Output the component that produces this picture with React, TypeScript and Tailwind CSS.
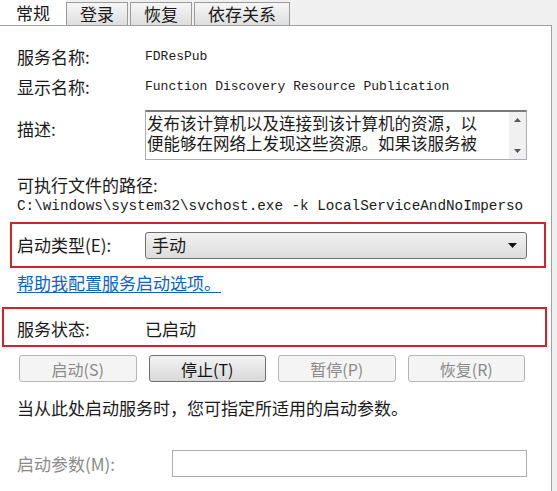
import React from 'react';

const cjk = { fontFamily: '"Noto Sans CJK SC", "Noto Sans", sans-serif' };
const mono = { fontFamily: '"Liberation Mono", "DejaVu Sans Mono", monospace' };

function Tab({ label, active }: { label: string; active?: boolean }) {
  if (active) {
    return (
      <div className="w-[66px] h-[25px] flex items-center justify-center text-[17px] text-[#1a1a1a] bg-white">
        {label}
      </div>
    );
  }
  return (
    <div className="h-[23px] flex items-center px-[13px] mr-[2px] text-[17px] text-[#1a1a1a] border border-b-0 border-[#9a9a9a] bg-gradient-to-b from-[#f6f6f6] to-[#dedede]">
      {label}
    </div>
  );
}

function Btn({ label, enabled }: { label: string; enabled?: boolean }) {
  return (
    <div
      className={`h-[27px] flex items-center justify-center rounded-[3px] text-[16px] border ${
        enabled
          ? 'border-[#707070] text-[#111] bg-gradient-to-b from-[#f3f3f3] to-[#d9d9d9]'
          : 'border-[#b5b5b5] text-[#8a8a8a] bg-[#f4f4f4]'
      }`}
    >
      {label}
    </div>
  );
}

export default function App() {
  return (
    <div className="w-[557px] h-[491px] bg-[#f0f0f0] overflow-hidden" style={cjk}>
      {/* Tabs */}
      <div className="flex items-end h-[25px]">
        <Tab label="常规" active />
        <Tab label="登录" />
        <Tab label="恢复" />
        <Tab label="依存关系" />
      </div>

      {/* Panel */}
      <div className="w-[552px] h-[466px] bg-white border-t border-r border-[#a0a0a0] pt-[19px] text-[17px] text-[#1a1a1a]">
        <div className="h-[24px] flex items-center pl-[17px]">
          <span className="w-[128px]">服务名称:</span>
          <span className="text-[13px]" style={mono}>FDResPub</span>
        </div>
        <div className="mt-[6px] h-[24px] flex items-center pl-[17px]">
          <span className="w-[128px]">显示名称:</span>
          <span className="text-[13px]" style={mono}>Function Discovery Resource Publication</span>
        </div>

        {/* Description */}
        <div className="mt-[11px] h-[50px] flex pl-[17px]">
          <span className="w-[128px] pt-[6px]">描述:</span>
          <div className="w-[382px] h-[50px] flex border border-[#abadb3] border-t-[#7a7a7a] border-t-2">
            <div className="flex-1 pl-[1px] pt-[1px] text-[16.5px] leading-[20px]">
              <div className="whitespace-nowrap">发布该计算机以及连接到该计算机的资源，以</div>
              <div className="whitespace-nowrap">便能够在网络上发现这些资源。如果该服务被</div>
            </div>
            <div className="w-[17px] bg-[#f0f0f0] flex flex-col items-center justify-between py-[6px]">
              <svg width="7" height="4" viewBox="0 0 7 4"><path d="M0 4 L3.5 0 L7 4 Z" fill="#555" /></svg>
              <svg width="7" height="4" viewBox="0 0 7 4"><path d="M0 0 L3.5 4 L7 0 Z" fill="#555" /></svg>
            </div>
          </div>
        </div>

        <div className="mt-[13px] h-[24px] flex items-center pl-[17px]">可执行文件的路径:</div>
        <div className="h-[20px] flex items-center pl-[17px]">
          <span className="text-[14.3px] whitespace-nowrap" style={mono}>
            C:\windows\system32\svchost.exe -k LocalServiceAndNoImperso
          </span>
        </div>

        {/* Startup type (highlighted) */}
        <div className="mt-[5px] ml-[10px] w-[536px] h-[46px] border-2 border-[#d0232b] flex items-center pl-[5px]">
          <span className="w-[128px]">启动类型(E):</span>
          <div className="w-[382px] h-[27px] rounded-[3px] border border-[#707070] bg-gradient-to-b from-[#f2f2f2] to-[#dcdcdc] flex items-center justify-between pl-[6px] pr-[9px]">
            <span>手动</span>
            <svg width="9" height="5" viewBox="0 0 9 5"><path d="M0 0 L9 0 L4.5 5 Z" fill="#111" /></svg>
          </div>
        </div>

        <div className="mt-[3px] h-[24px] flex items-center pl-[17px]">
          <span className="text-[#0b63c5] underline underline-offset-2">帮助我配置服务启动选项。</span>
        </div>

        {/* Service status (highlighted) */}
        <div className="mt-[12px] ml-[2px] w-[545px] h-[40px] border-2 border-[#d0232b] flex items-center pl-[13px] pt-[4px]">
          <span className="w-[128px]">服务状态:</span>
          <span>已启动</span>
        </div>

        {/* Buttons */}
        <div className="mt-[8px] ml-[19px] w-[506px] grid grid-cols-4 gap-[12px]">
          <Btn label="启动(S)" />
          <Btn label="停止(T)" enabled />
          <Btn label="暂停(P)" />
          <Btn label="恢复(R)" />
        </div>

        <div className="mt-[14px] h-[24px] flex items-center pl-[17px]">
          当从此处启动服务时，您可指定所适用的启动参数。
        </div>

        <div className="mt-[30px] h-[27px] flex items-center pl-[17px]">
          <span className="w-[155px] text-[#8a8a8a]">启动参数(M):</span>
          <div className="w-[355px] h-[27px] border border-[#abadb3] bg-white" />
        </div>
      </div>
    </div>
  );
}
